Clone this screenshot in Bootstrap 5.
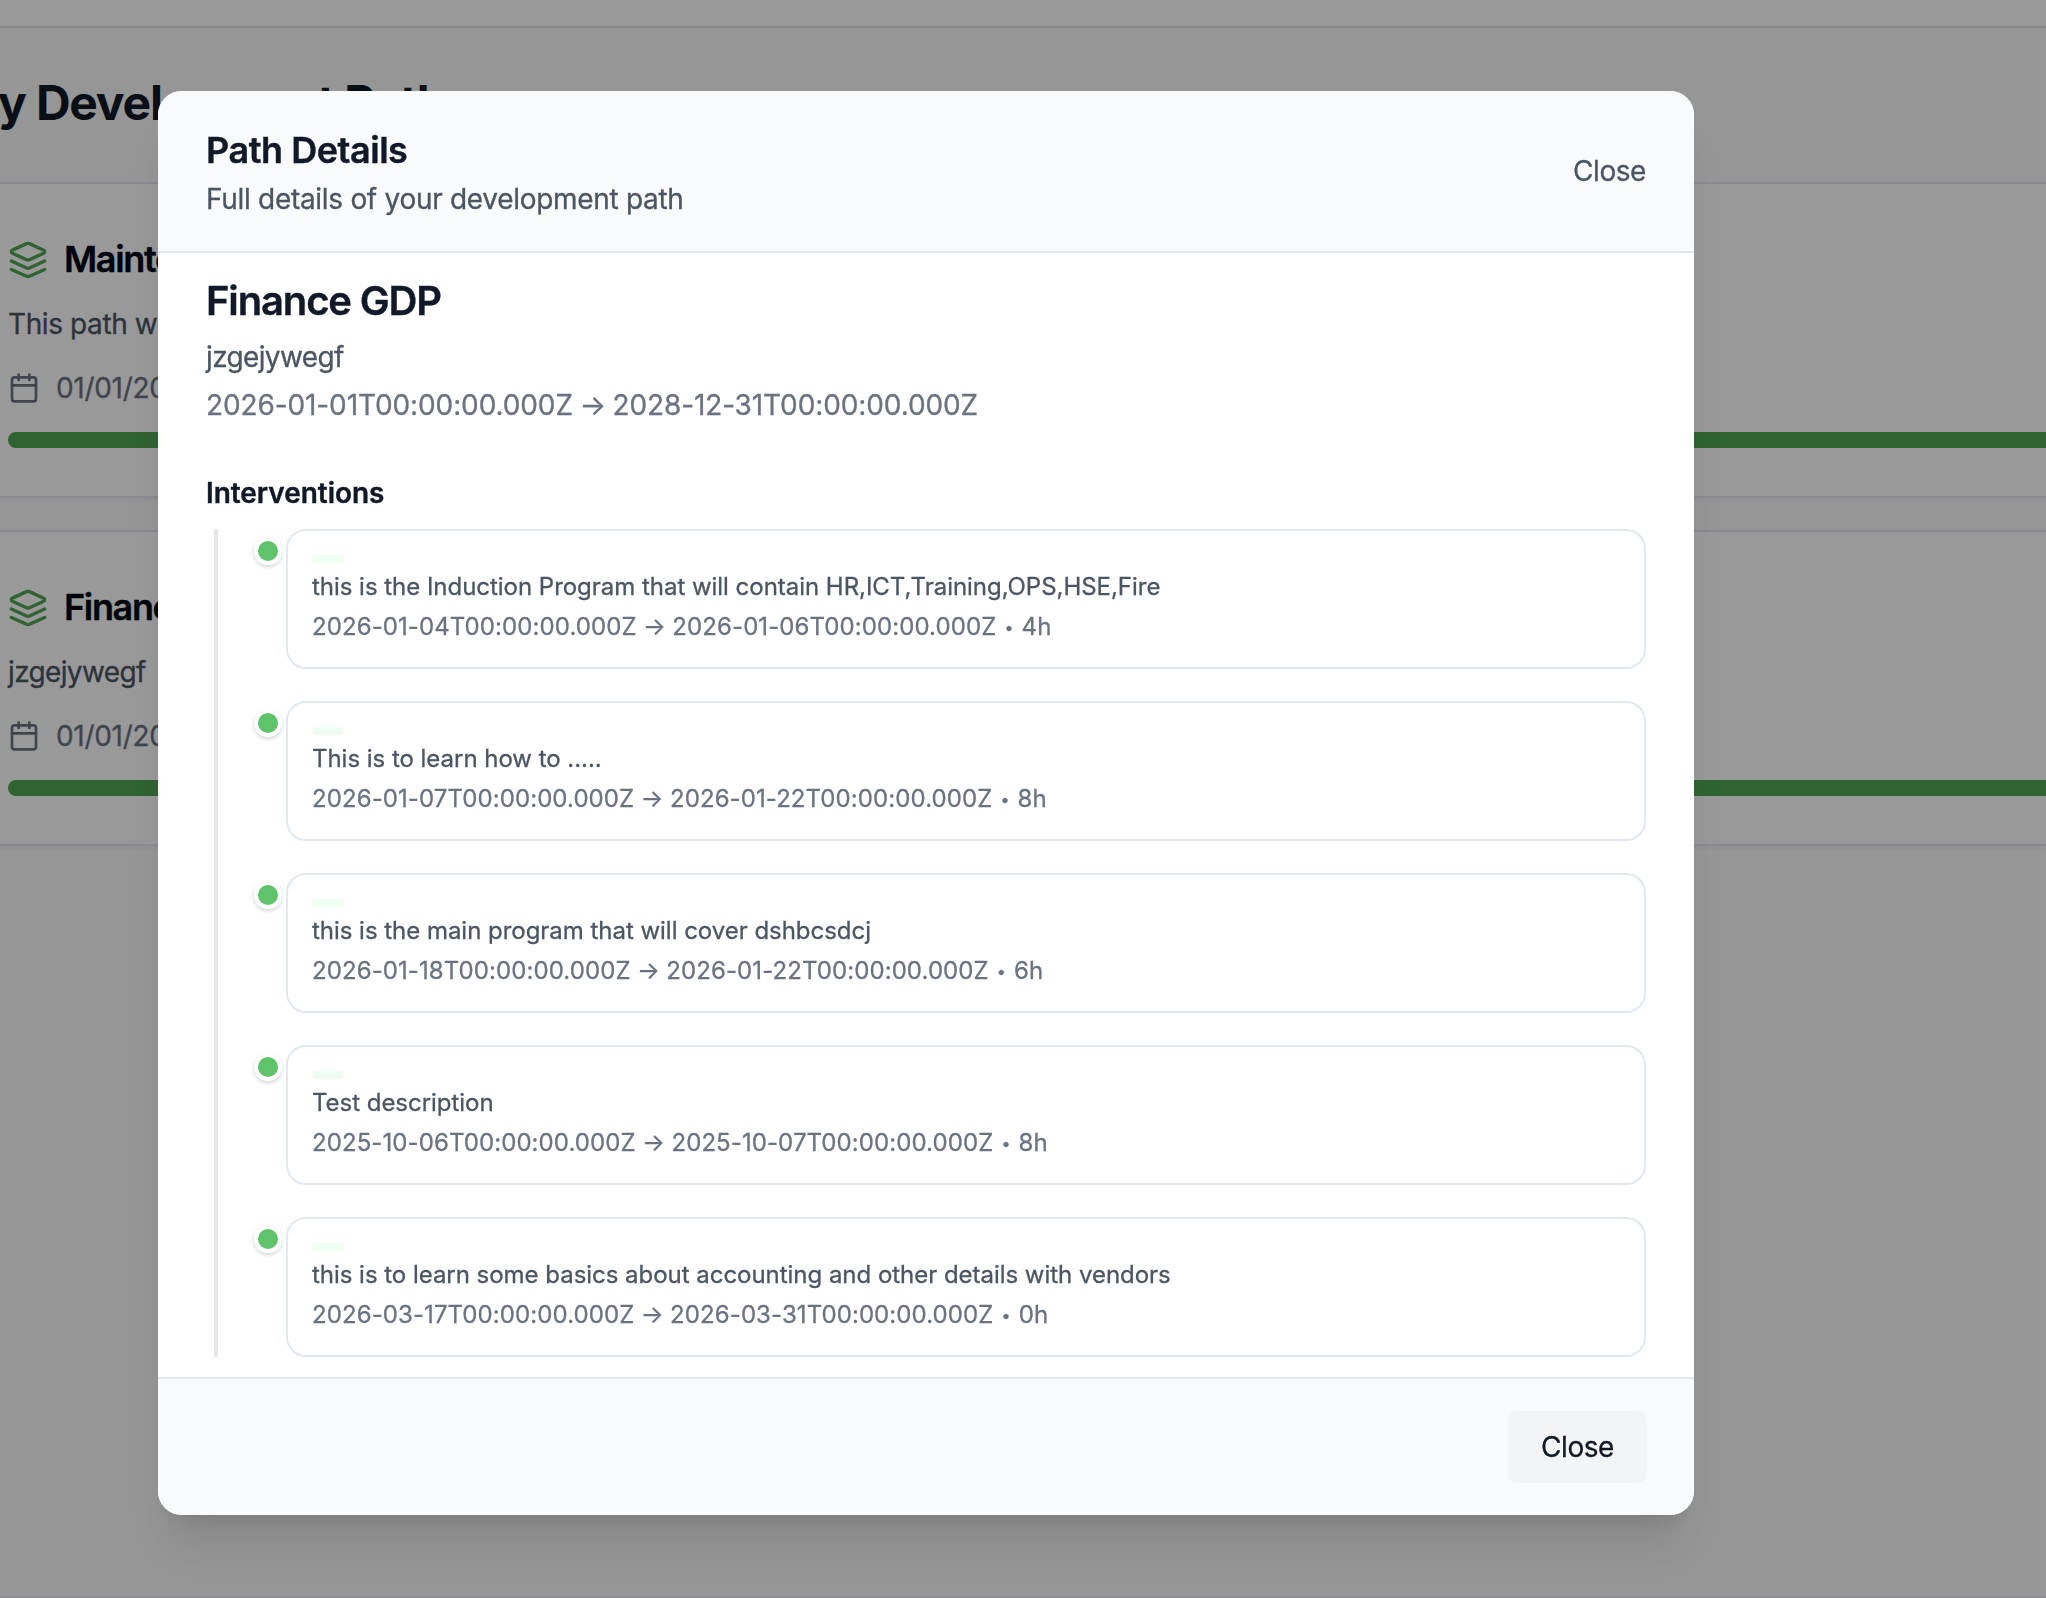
<!DOCTYPE html>
<html lang="en">
<head>
<meta charset="utf-8">
<meta name="viewport" content="width=device-width, initial-scale=1">
<title>My Development Paths</title>
<link href="https://cdn.jsdelivr.net/npm/bootstrap@5.3.0/dist/css/bootstrap.min.css" rel="stylesheet">
<style>
  body { font-family: Inter, "Liberation Sans", sans-serif; font-size: 28px; line-height: 40px; background: #fafafa; color: #111827; overflow: hidden; height: 100vh; }

  /* Page behind the dialog */
  .page-shell { margin-left: -46px; height: 1598px; border-bottom: 1px solid #e5e7eb; }
  .top-strip { height: 28px; border-bottom: 2px solid #e5e7eb; background: #fff; }
  .page-head { height: 154px; padding-bottom: 4px; }
  .page-title { font-size: 48px; line-height: 64px; font-weight: 700; letter-spacing: -1.2px; color: #111827; white-space: nowrap; }
  .path-card { height: 316px; border: 2px solid #e2e8f0; border-right: 0; background: #fff; padding: 48px 0 0 52px; box-shadow: 0 2px 4px rgba(0,0,0,.05); }
  .path-card + .path-card { margin-top: 32px; }
  .path-row { height: 56px; gap: 16px; }
  .path-name { font-size: 36px; line-height: 54px; padding-bottom: 2px; font-weight: 600; letter-spacing: -1.35px; color: #020817; -webkit-text-stroke: .4px #020817; }
  .path-text { margin: 16px 0 0; letter-spacing: -.4px; }
  .path-dates { margin-top: 24px; gap: 16px; letter-spacing: -.3px; }
  .path-bar { height: 16px; margin-top: 24px; border-radius: 8px 0 0 8px; background: #50a552; }
  .ink-green { color: #50a552; }

  .text-soft { color: #4b5563; -webkit-text-stroke: .3px #4b5563; }
  .text-softer { color: #6b7280; -webkit-text-stroke: .3px #6b7280; }

  /* Dialog */
  .scrim { background: rgba(0,0,0,.4); padding-top: 91px; padding-left: 158px; }
  .details-box { width: 1536px; height: 1424px; border-radius: 24px; border: 0; color: #111827; overflow: hidden; box-shadow: 0 40px 50px -10px rgba(0,0,0,.1), 0 16px 20px -12px rgba(0,0,0,.1); }
  .details-head { padding: 32px 48px; background: #f9fafc; border-bottom: 2px solid #e2e8f0; }
  .details-title { font-size: 36px; line-height: 54px; padding-bottom: 2px; font-weight: 600; letter-spacing: -.46px; }
  .details-title, .goal-title, .section-title { -webkit-text-stroke: .4px #111827; }
  .details-sub { letter-spacing: -.3px; }
  .details-body { padding: 20px 48px; }
  .details-foot { padding: 32px 48px; background: #f9fafc; border-top: 2px solid #e2e8f0; }
  .goal-title { font-size: 40px; line-height: 56px; font-weight: 600; letter-spacing: -1.15px; }
  .goal-text { letter-spacing: -.65px; }
  .goal-dates { letter-spacing: -.11px; }
  .section-title { font-size: 28px; line-height: 40px; font-weight: 600; letter-spacing: -.05px; margin-top: 48px; margin-bottom: 16px; }
  .timeline { margin-left: 8px; border-left: 4px solid #e5e7eb; padding-left: 36px; gap: 32px; }
  .dot { width: 28px; height: 28px; margin-top: 8px; margin-right: 4px; border: 4px solid #fff; border-radius: 50%; background: #5fc36a; box-shadow: 0 2px 4px rgba(0,0,0,.16); }
  .step { height: 140px; border: 2px solid #e2e8f0; border-radius: 20px; padding: 24px; font-size: 24px; line-height: 32px; gap: 8px; }
  .step .text-soft { letter-spacing: -.03px; }
  .step .text-softer { letter-spacing: .09px; }
  .tag { width: 32px; height: 8px; border-radius: 4px; background: #f0fdf4; }
  .arrow { margin: 0 -1.3px; }
  .step .arrow { margin: 0 -.5px; }
  .bullet { display: inline-block; width: 11.5px; text-align: center; font-size: 16px; line-height: 16px; vertical-align: 2px; }
  .btn-plain { border: 0; background: none; padding: 0; letter-spacing: -.45px; }
  .btn-foot { padding: 16px 32px; border: 0; border-radius: 8px; background: #f3f4f6; color: #111827; letter-spacing: -.45px; -webkit-text-stroke: .3px #111827; }
</style>
<script src="https://cdn.jsdelivr.net/npm/bootstrap@5.3.0/dist/js/bootstrap.bundle.min.js"></script>
</head>
<body>
<svg class="d-none">
  <symbol id="layers" viewBox="0 0 24 24"><g fill="none" stroke="currentColor" stroke-width="2" stroke-linecap="round" stroke-linejoin="round"><path d="m12.83 2.18a2 2 0 0 0-1.66 0L2.6 6.08a1 1 0 0 0 0 1.83l8.58 3.91a2 2 0 0 0 1.66 0l8.58-3.9a1 1 0 0 0 0-1.83Z"/><path d="m22 17.65-9.17 4.16a2 2 0 0 1-1.66 0L2 17.65"/><path d="m22 12.65-9.17 4.16a2 2 0 0 1-1.66 0L2 12.65"/></g></symbol>
  <symbol id="calendar" viewBox="0 0 24 24"><g fill="none" stroke="currentColor" stroke-width="2" stroke-linecap="round" stroke-linejoin="round"><path d="M8 2v4M16 2v4M3 10h18"/><rect x="3" y="4" width="18" height="18" rx="2"/></g></symbol>
</svg>

<div class="page-shell">
  <div class="top-strip"></div>
  <header class="page-head d-flex align-items-center"><h1 class="page-title mb-0">My Development Paths</h1></header>
  <section class="path-card">
    <div class="path-row d-flex align-items-center">
      <svg class="ink-green" width="40" height="40"><use href="#layers"/></svg>
      <h2 class="path-name mb-0">Mainte</h2>
    </div>
    <p class="path-text text-soft">This path w</p>
    <div class="path-dates text-softer d-flex align-items-center"><svg width="32" height="32"><use href="#calendar"/></svg>01/01/20</div>
    <div class="path-bar"></div>
  </section>
  <section class="path-card">
    <div class="path-row d-flex align-items-center">
      <svg class="ink-green" width="40" height="40"><use href="#layers"/></svg>
      <h2 class="path-name mb-0">Financ</h2>
    </div>
    <p class="path-text text-soft goal-text">jzgejywegf</p>
    <div class="path-dates text-softer d-flex align-items-center"><svg width="32" height="32"><use href="#calendar"/></svg>01/01/20</div>
    <div class="path-bar"></div>
  </section>
</div>

<div class="scrim position-fixed top-0 start-0 w-100 h-100">
  <div class="details-box modal-content bg-white" role="dialog">
    <div class="details-head d-flex justify-content-between align-items-center">
      <div>
        <div class="details-title">Path Details</div>
        <div class="details-sub text-soft">Full details of your development path</div>
      </div>
      <button type="button" class="btn-plain text-soft">Close</button>
    </div>
    <div class="details-body flex-grow-1">
      <div class="goal-title">Finance GDP</div>
      <div class="goal-text text-soft mt-2">jzgejywegf</div>
      <div class="goal-dates text-softer mt-2">2026-01-01T00:00:00.000Z <span class="arrow">→</span> 2028-12-31T00:00:00.000Z</div>
      <div class="section-title">Interventions</div>
      <div class="timeline d-flex flex-column">
        <div class="d-flex">
          <div class="dot"></div>
          <div class="step d-flex flex-column flex-grow-1">
            <div class="tag"></div>
            <div class="text-soft">this is the Induction Program that will contain HR,ICT,Training,OPS,HSE,Fire</div>
            <div class="text-softer">2026-01-04T00:00:00.000Z <span class="arrow">→</span> 2026-01-06T00:00:00.000Z <span class="bullet">•</span> 4h</div>
          </div>
        </div>
        <div class="d-flex">
          <div class="dot"></div>
          <div class="step d-flex flex-column flex-grow-1">
            <div class="tag"></div>
            <div class="text-soft">This is to learn how to .....</div>
            <div class="text-softer">2026-01-07T00:00:00.000Z <span class="arrow">→</span> 2026-01-22T00:00:00.000Z <span class="bullet">•</span> 8h</div>
          </div>
        </div>
        <div class="d-flex">
          <div class="dot"></div>
          <div class="step d-flex flex-column flex-grow-1">
            <div class="tag"></div>
            <div class="text-soft">this is the main program that will cover dshbcsdcj</div>
            <div class="text-softer">2026-01-18T00:00:00.000Z <span class="arrow">→</span> 2026-01-22T00:00:00.000Z <span class="bullet">•</span> 6h</div>
          </div>
        </div>
        <div class="d-flex">
          <div class="dot"></div>
          <div class="step d-flex flex-column flex-grow-1">
            <div class="tag"></div>
            <div class="text-soft">Test description</div>
            <div class="text-softer">2025-10-06T00:00:00.000Z <span class="arrow">→</span> 2025-10-07T00:00:00.000Z <span class="bullet">•</span> 8h</div>
          </div>
        </div>
        <div class="d-flex">
          <div class="dot"></div>
          <div class="step d-flex flex-column flex-grow-1">
            <div class="tag"></div>
            <div class="text-soft">this is to learn some basics about accounting and other details with vendors</div>
            <div class="text-softer">2026-03-17T00:00:00.000Z <span class="arrow">→</span> 2026-03-31T00:00:00.000Z <span class="bullet">•</span> 0h</div>
          </div>
        </div>
      </div>
    </div>
    <div class="details-foot d-flex justify-content-end">
      <button type="button" class="btn-foot">Close</button>
    </div>
  </div>
</div>
</body>
</html>
